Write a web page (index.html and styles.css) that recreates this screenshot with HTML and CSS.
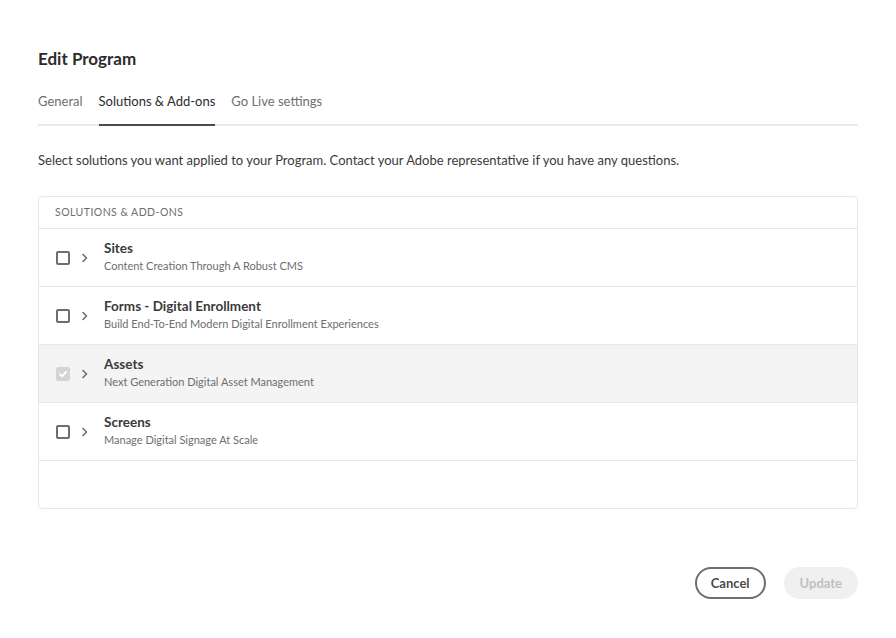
FILE: index.html
```html
<!DOCTYPE html>
<html>
<head>
<meta charset="utf-8">
<link rel="stylesheet" href="styles.css">
</head>
<body>
<div class="dialog">
  <h1 class="title">Edit Program</h1>
  <div class="tabs">
    <div class="tab">General</div>
    <div class="tab active">Solutions &amp; Add-ons</div>
    <div class="tab">Go Live settings</div>
  </div>
  <p class="desc">Select solutions you want applied to your Program. Contact your Adobe representative if you have any questions.</p>
  <div class="table">
    <div class="thead">SOLUTIONS &amp; ADD-ONS</div>
    <div class="row">
      <span class="cb"></span>
      <svg class="chev" width="8" height="10" viewBox="0 0 8 10"><path d="M2 1.5 L5.5 5 L2 8.5" fill="none" stroke="#6e6e6e" stroke-width="1.6" stroke-linecap="round" stroke-linejoin="round"/></svg>
      <div class="txt"><div class="name">Sites</div><div class="sub">Content Creation Through A Robust CMS</div></div>
    </div>
    <div class="row">
      <span class="cb"></span>
      <svg class="chev" width="8" height="10" viewBox="0 0 8 10"><path d="M2 1.5 L5.5 5 L2 8.5" fill="none" stroke="#6e6e6e" stroke-width="1.6" stroke-linecap="round" stroke-linejoin="round"/></svg>
      <div class="txt"><div class="name">Forms - Digital Enrollment</div><div class="sub">Build End-To-End Modern Digital Enrollment Experiences</div></div>
    </div>
    <div class="row selected">
      <span class="cb checked"><svg width="10" height="10" viewBox="0 0 10 10"><path d="M2 5.2 L4.2 7.3 L8 2.8" fill="none" stroke="#fff" stroke-width="1.8" stroke-linecap="round" stroke-linejoin="round"/></svg></span>
      <svg class="chev" width="8" height="10" viewBox="0 0 8 10"><path d="M2 1.5 L5.5 5 L2 8.5" fill="none" stroke="#6e6e6e" stroke-width="1.6" stroke-linecap="round" stroke-linejoin="round"/></svg>
      <div class="txt"><div class="name">Assets</div><div class="sub">Next Generation Digital Asset Management</div></div>
    </div>
    <div class="row">
      <span class="cb"></span>
      <svg class="chev" width="8" height="10" viewBox="0 0 8 10"><path d="M2 1.5 L5.5 5 L2 8.5" fill="none" stroke="#6e6e6e" stroke-width="1.6" stroke-linecap="round" stroke-linejoin="round"/></svg>
      <div class="txt"><div class="name">Screens</div><div class="sub">Manage Digital Signage At Scale</div></div>
    </div>
  </div>
  <div class="footer">
    <button class="btn cancel">Cancel</button>
    <button class="btn update">Update</button>
  </div>
</div>
</body>
</html>
```
FILE: styles.css
```css
html, body { margin: 0; padding: 0; background: #fff; }
body { font-family: "Lato", "Noto Sans", sans-serif; color: #2c2c2c; }
.dialog { padding: 46px 38px 0 38px; width: 820px; }
.title { margin: 0; font-size: 17px; font-weight: 700; line-height: 26px; color: #2c2c2c; }
.tabs { display: flex; gap: 16px; margin-top: 20px; border-bottom: 2px solid #eaeaea; height: 34px; box-sizing: border-box; }
.tab { font-size: 13px; line-height: 18px; color: #6e6e6e; padding-top: 0; }
.tab.active { color: #2c2c2c; border-bottom: 2px solid #4b4b4b; margin-bottom: -2px; }
.desc { margin: 25px 0 0 0; font-size: 13px; line-height: 18px; color: #3a3a3a; }
.table { margin-top: 27px; border: 1px solid #e6e6e6; border-radius: 4px; height: 313px; box-sizing: border-box; }
.thead { height: 32px; border-bottom: 1px solid #e6e6e6; font-size: 10.5px; letter-spacing: 0.45px; color: #6e6e6e; padding-left: 16px; line-height: 31px; box-sizing: border-box; }
.row { height: 58px; border-bottom: 1px solid #e8e8e8; display: flex; align-items: center; padding-left: 17px; box-sizing: border-box; }
.row.selected { background: #f4f4f4; }
.cb { width: 14px; height: 14px; box-sizing: border-box; border: 2px solid #6e6e6e; border-radius: 2px; display: flex; align-items: center; justify-content: center; }
.cb.checked { border: none; background: #d4d4d4; }
.chev { margin-left: 11px; }
.txt { margin-left: 15px; margin-top: -2px; }
.name { font-size: 13.5px; font-weight: 700; line-height: 17px; color: #3a3a3a; }
.sub { font-size: 11px; line-height: 16px; color: #6e6e6e; margin-top: 1px; }
.footer { display: flex; justify-content: flex-end; gap: 18px; margin-top: 58px; }
.btn { font-family: inherit; font-size: 13px; font-weight: 700; height: 32px; border-radius: 16px; padding: 0 14px; box-sizing: border-box; }
.cancel { border: 2px solid #6e6e6e; background: #fff; color: #4b4b4b; }
.update { border: none; background: #f0f0f0; color: #c0c0c0; padding: 0 16px; }
```
